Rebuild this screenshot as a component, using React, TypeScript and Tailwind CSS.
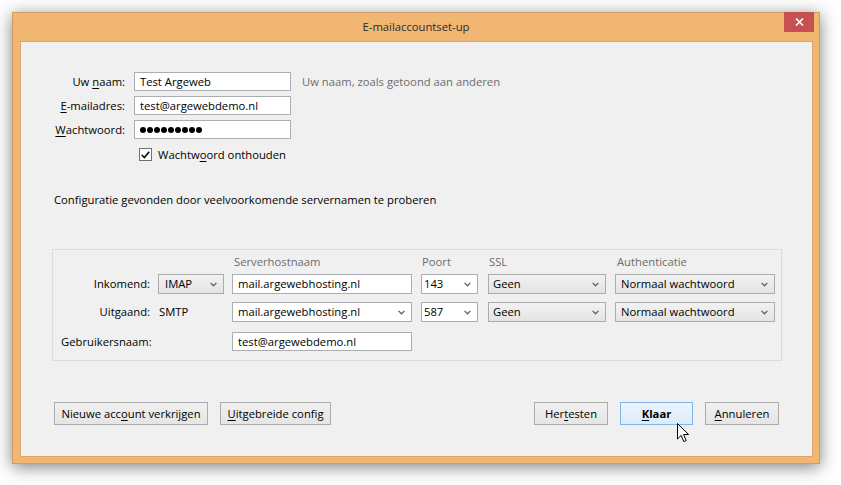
import clsx from 'clsx';
import type { ReactNode } from 'react';

function Chevron() {
  return (
    <svg width="7" height="5" viewBox="0 0 7 5" className="shrink-0">
      <path d="M0.6 0.9 L3.5 3.8 L6.4 0.9" fill="none" stroke="#5f5f5f" strokeWidth="1.3" />
    </svg>
  );
}

function U({ children }: { children: ReactNode }) {
  return <span className="underline underline-offset-[2px] decoration-[1px]">{children}</span>;
}

function TextBox({ children, className }: { children?: ReactNode; className?: string }) {
  return (
    <div className={clsx('flex h-[19px] items-center border border-[#abadb3] bg-white pl-[5px] text-black', className)}>
      {children}
    </div>
  );
}

function Combo({ value, editable, className }: { value: string; editable?: boolean; className?: string }) {
  return (
    <div
      className={clsx(
        'flex h-[20px] items-center justify-between pr-[6px] text-black',
        editable
          ? 'border border-[#abadb3] bg-white'
          : 'border border-[#acacac] bg-gradient-to-b from-[#f2f2f2] to-[#e4e4e4]',
        className,
      )}
    >
      <span>{value}</span>
      <Chevron />
    </div>
  );
}

function Button({ children, primary, className }: { children: ReactNode; primary?: boolean; className?: string }) {
  return (
    <div
      className={clsx(
        'flex h-[23px] items-center justify-center border text-black',
        primary
          ? 'border-[#7eb4ea] bg-gradient-to-b from-[#ecf4fc] to-[#dcecfc]'
          : 'border-[#acacac] bg-gradient-to-b from-[#f0f0f0] to-[#e5e5e5]',
        className,
      )}
    >
      {children}
    </div>
  );
}

export default function App() {
  return (
    <div className="relative h-[485px] w-[841px] overflow-hidden bg-white pl-[12px] pt-[12px] font-['Open_Sans',sans-serif] text-[11.25px] leading-[16px]">
      {/* venster */}
      <div className="flex h-[452px] w-[808px] flex-col border border-[#d49c5e] bg-[#f2b673] shadow-[0_3px_16px_rgba(0,0,0,0.5)]">
        <div className="relative flex h-[28px] shrink-0 items-center justify-center text-[#2b2b2b]">
          E-mailaccountset-up
          <div className="absolute right-[5px] top-[-1px] flex h-[20px] w-[30px] items-center justify-center bg-[#c75050]">
            <svg width="9" height="8" viewBox="0 0 9 8">
              <path d="M1 0.5 L8 7.5 M8 0.5 L1 7.5" stroke="white" strokeWidth="1.6" />
            </svg>
          </div>
        </div>

        <div className="ml-[7px] mr-[6px] flex h-[416px] flex-col border border-[#dba66c] bg-[#f0f0f0]">
          {/* accountgegevens */}
          <div className="mt-[30px] grid grid-cols-[71px_157px_auto] items-center gap-x-[9px] gap-y-[5px] pl-[33px]">
            <span className="text-right text-black">
              Uw <U>n</U>aam:
            </span>
            <TextBox>Test Argeweb</TextBox>
            <span className="pl-[2px] text-[#6d6d6d]">Uw naam, zoals getoond aan anderen</span>

            <span className="text-right text-black">
              <U>E</U>-mailadres:
            </span>
            <TextBox>test@argewebdemo.nl</TextBox>
            <span />

            <span className="text-right text-black">
              <U>W</U>achtwoord:
            </span>
            <TextBox>
              <div className="flex gap-[1px]">
                {Array.from({ length: 9 }).map((_, i) => (
                  <span key={i} className="h-[6px] w-[6px] rounded-full bg-black" />
                ))}
              </div>
            </TextBox>
            <span />
          </div>

          <div className="ml-[118px] mt-[9px] flex h-[13px] items-center gap-[6px] text-black">
            <div className="flex h-[13px] w-[13px] items-center justify-center border border-[#707070] bg-white">
              <svg width="9" height="8" viewBox="0 0 9 8">
                <path d="M0.8 4 L3.4 6.6 L8.2 0.8" fill="none" stroke="#111" strokeWidth="1.7" />
              </svg>
            </div>
            <span>
              Wachtw<U>o</U>ord onthouden
            </span>
          </div>

          <p className="ml-[33px] mt-[31px] text-black">Configuratie gevonden door veelvoorkomende servernamen te proberen</p>

          {/* serverinstellingen */}
          <div className="ml-[31px] mt-[41px] h-[112px] w-[730px] border border-[#dcdcdc] pl-[8px] pt-[4px]">
            <div className="grid grid-cols-[89px_66px_181px_59px_119px_160px] gap-x-[8px] text-[#6d6d6d]">
              <span />
              <span />
              <span className="pl-[2px]">Serverhostnaam</span>
              <span className="pl-[1px]">Poort</span>
              <span className="pl-[1px]">SSL</span>
              <span className="pl-[2px]">Authenticatie</span>
            </div>

            <div className="mt-[4px] grid grid-cols-[89px_66px_181px_59px_119px_160px] items-center gap-x-[8px]">
              <span className="text-right text-black">Inkomend:</span>
              <Combo value="IMAP" className="pl-[6px]" />
              <TextBox className="h-[20px] w-[180px]">mail.argewebhosting.nl</TextBox>
              <Combo value="143" editable className="w-[57px] pl-[2px]" />
              <Combo value="Geen" className="w-[118px] pl-[4px]" />
              <Combo value="Normaal wachtwoord" className="pl-[5px]" />
            </div>

            <div className="mt-[8px] grid grid-cols-[89px_66px_181px_59px_119px_160px] items-center gap-x-[8px]">
              <span className="text-right text-black">Uitgaand:</span>
              <span className="pl-[1px] text-black">SMTP</span>
              <Combo value="mail.argewebhosting.nl" editable className="w-[180px] pl-[5px]" />
              <Combo value="587" editable className="w-[57px] pl-[2px]" />
              <Combo value="Geen" className="w-[118px] pl-[4px]" />
              <Combo value="Normaal wachtwoord" className="pl-[5px]" />
            </div>

            <div className="mt-[10px] grid grid-cols-[163px_181px] items-center gap-x-[8px]">
              <span className="text-black">Gebruikersnaam:</span>
              <TextBox className="w-[180px]">test@argewebdemo.nl</TextBox>
            </div>
          </div>

          {/* knoppen */}
          <div className="mt-[41px] flex items-center justify-between px-[33px]">
            <div className="flex gap-[12px]">
              <Button className="w-[154px]">
                Nieuwe acc<U>o</U>unt verkrijgen
              </Button>
              <Button className="w-[111px]">
                <U>U</U>itgebreide config
              </Button>
            </div>
            <div className="flex gap-[12px]">
              <Button className="w-[74px]">
                Her<U>t</U>esten
              </Button>
              <Button primary className="w-[73px] font-bold">
                <U>K</U>laar
              </Button>
              <Button className="w-[74px]">
                <U>A</U>nnuleren
              </Button>
            </div>
          </div>
        </div>
      </div>

      {/* muisaanwijzer */}
      <svg className="absolute left-[677px] top-[423px]" width="13" height="20" viewBox="0 0 13 20">
        <path d="M0.5 0.5 L0.5 16 L4.2 12.4 L6.8 18.6 L9.2 17.6 L6.6 11.5 L11.6 11.5 Z" fill="white" stroke="black" strokeWidth="1" strokeLinejoin="miter" />
      </svg>
    </div>
  );
}
